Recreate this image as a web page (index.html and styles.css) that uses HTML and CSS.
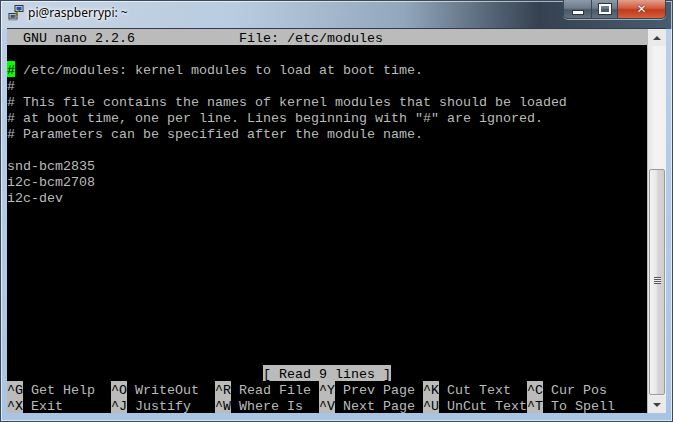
FILE: index.html
```html
<!DOCTYPE html>
<html>
<head>
    <title>pi@raspberrypi: ~</title>
    <link rel="stylesheet" href="styles.css">
</head>
<body>
    <div class="window">
        <div class="titlebar">
            <svg class="app-icon" width="16" height="16" viewBox="0 0 16 16">
                <rect x="7" y="0.5" width="8" height="6" fill="#d8d8d8" stroke="#333" stroke-width="1"/>
                <rect x="8.5" y="1.8" width="5" height="3.4" fill="#2050c0"/>
                <rect x="1" y="8.5" width="8" height="5.5" fill="#d8d8d8" stroke="#333" stroke-width="1"/>
                <rect x="2.5" y="9.8" width="5" height="3" fill="#2050c0"/>
                <rect x="0.5" y="14" width="9" height="1.5" fill="#999"/>
                <path d="M12 5 L7 8.5 L9 9 L3.5 13 L10 9.6 L8 9 Z" fill="#f5e21b" stroke="#6b5a00" stroke-width="0.6"/>
            </svg>
            <span class="title">pi@raspberrypi: ~</span>
            <div class="caption-buttons">
                <div class="cap-btn min"><span class="glyph-min"></span></div>
                <div class="cap-btn max"><span class="glyph-max"></span></div>
                <div class="cap-btn close">&#x2715;</div>
            </div>
        </div>

        <div class="client">
            <div class="term">
                <div class="ln rv">  GNU nano 2.2.6             File: /etc/modules</div>
                <div class="ln"></div>
                <div class="ln"><span class="cursor">#</span> /etc/modules: kernel modules to load at boot time.</div>
                <div class="ln">#</div>
                <div class="ln"># This file contains the names of kernel modules that should be loaded</div>
                <div class="ln"># at boot time, one per line. Lines beginning with "#" are ignored.</div>
                <div class="ln"># Parameters can be specified after the module name.</div>
                <div class="ln"></div>
                <div class="ln">snd-bcm2835</div>
                <div class="ln">i2c-bcm2708</div>
                <div class="ln">i2c-dev</div>
                <div class="ln"></div>
                <div class="ln"></div>
                <div class="ln"></div>
                <div class="ln"></div>
                <div class="ln"></div>
                <div class="ln"></div>
                <div class="ln"></div>
                <div class="ln"></div>
                <div class="ln"></div>
                <div class="ln"></div>
                <div class="ln">                                <span class="rv">[ Read 9 lines ]</span></div>
                <div class="ln"><span class="rv">^G</span> Get Help  <span class="rv">^O</span> WriteOut  <span class="rv">^R</span> Read File <span class="rv">^Y</span> Prev Page <span class="rv">^K</span> Cut Text  <span class="rv">^C</span> Cur Pos</div>
                <div class="ln"><span class="rv">^X</span> Exit      <span class="rv">^J</span> Justify   <span class="rv">^W</span> Where Is  <span class="rv">^V</span> Next Page <span class="rv">^U</span> UnCut Text<span class="rv">^T</span> To Spell</div>
            </div>

            <div class="scrollbar">
                <div class="sb-arrow"><span class="arrow-up"></span></div>
                <div class="sb-track">
                    <div class="sb-thumb">
                        <span class="grip"></span>
                    </div>
                </div>
                <div class="sb-arrow"><span class="arrow-down"></span></div>
            </div>
        </div>
    </div>
</body>
</html>
```

FILE: styles.css
```css
body {
    margin: 0;
    background: #000;
}
.window {
    width: 673px;
    height: 422px;
    box-sizing: border-box;
    padding: 0 7px 9px 7px;
    display: flex;
    flex-direction: column;
    background:
        linear-gradient(90deg, rgba(200,214,229,0.9) 0%, rgba(185,203,222,0.85) 35%, rgba(120,140,160,0.6) 60%, rgba(45,58,72,0.95) 80%, rgba(60,80,100,0.9) 100%) top / 100% 29px no-repeat,
        linear-gradient(180deg, #bcd0e6 0%, #a9c4e2 100%);
    box-shadow: inset 0 0 0 1px #3a4a5c, inset 0 0 0 2px rgba(255,255,255,0.6);
    overflow: hidden;
}
.titlebar {
    height: 29px;
    flex: none;
    display: flex;
    align-items: flex-start;
}
.app-icon {
    margin: 5px 0 0 1px;
    flex: none;
}
.title {
    margin: 5px 0 0 4px;
    font-family: "Noto Sans", "Open Sans", sans-serif;
    font-size: 12px;
    line-height: 16px;
    color: #000;
    text-shadow: 0 0 6px #fff, 0 0 3px #fff, 0 0 2px #fff;
}
.caption-buttons {
    margin-left: auto;
    display: flex;
    height: 18px;
    border: 1px solid #3a4654;
    border-top: none;
    border-radius: 0 0 5px 5px;
    overflow: hidden;
    box-shadow: 0 1px 0 rgba(255,255,255,0.5);
}
.cap-btn {
    height: 18px;
    display: flex;
    align-items: center;
    justify-content: center;
    box-sizing: border-box;
}
.cap-btn.min {
    width: 28px;
    background: linear-gradient(180deg, #8d9aa8 0%, #6d7b8a 45%, #4a5866 55%, #5f7080 100%);
    border-right: 1px solid #3a4654;
}
.cap-btn.max {
    width: 26px;
    background: linear-gradient(180deg, #8d9aa8 0%, #6d7b8a 45%, #4a5866 55%, #5f7080 100%);
    border-right: 1px solid #3a4654;
}
.cap-btn.close {
    width: 47px;
    background: linear-gradient(180deg, #e2a08e 0%, #d25a3e 45%, #c23a1e 55%, #d4603a 100%);
    color: #fff;
    font-family: "DejaVu Sans", sans-serif;
    font-size: 12px;
    font-weight: bold;
    text-shadow: 0 0 1px #4a1a10, 0 0 1px #4a1a10;
}
.glyph-min {
    width: 10px;
    height: 3px;
    margin-top: 6px;
    background: #fff;
    border: 1px solid #2c3440;
}
.glyph-max {
    width: 8px;
    height: 6px;
    border: 2px solid #fff;
    outline: 1px solid #2c3440;
}
.client {
    flex: 1;
    display: flex;
    border-top: 1px solid #2f3b48;
    margin-top: -1px;
}
.term {
    width: 640px;
    height: 384px;
    background: #000;
    color: #bbbbbb;
    font-family: "Liberation Mono", "Courier New", monospace;
    font-size: 13.333px;
    display: flex;
    flex-direction: column;
}
.ln {
    height: 16px;
    line-height: 19px;
    white-space: pre;
    overflow: hidden;
}
.rv {
    background: #bbbbbb;
    color: #000;
}
.ln .rv,
.cursor {
    display: inline-block;
    height: 16px;
    vertical-align: top;
}
.cursor {
    background: #00ff00;
    color: #000;
}
.scrollbar {
    width: 19px;
    display: flex;
    flex-direction: column;
    background: #eaeaea;
    border-left: 1px solid #b8bcc2;
    box-sizing: border-box;
}
.sb-arrow {
    height: 17px;
    display: flex;
    align-items: center;
    justify-content: center;
    flex: none;
}
.arrow-up {
    width: 0;
    height: 0;
    border-left: 4px solid transparent;
    border-right: 4px solid transparent;
    border-bottom: 4px solid #404040;
}
.arrow-down {
    width: 0;
    height: 0;
    border-left: 4px solid transparent;
    border-right: 4px solid transparent;
    border-top: 4px solid #404040;
}
.sb-track {
    flex: 1;
    display: flex;
    flex-direction: column;
    justify-content: flex-end;
    background: linear-gradient(90deg, #e6e6e6, #f4f4f4 40%, #f0f0f0);
}
.sb-thumb {
    height: 224px;
    margin: 0 1px 1px 1px;
    border: 1px solid #9a9a9a;
    border-radius: 2px;
    background: linear-gradient(90deg, #f3f3f3 0%, #e8e8e8 45%, #d6d6d6 55%, #cfcfcf 100%);
    display: flex;
    align-items: flex-start;
    justify-content: center;
}
.grip {
    width: 7px;
    height: 7px;
    margin-top: 107px;
    background: repeating-linear-gradient(180deg, #555 0 1px, #f0f0f0 1px 2px);
}
```
